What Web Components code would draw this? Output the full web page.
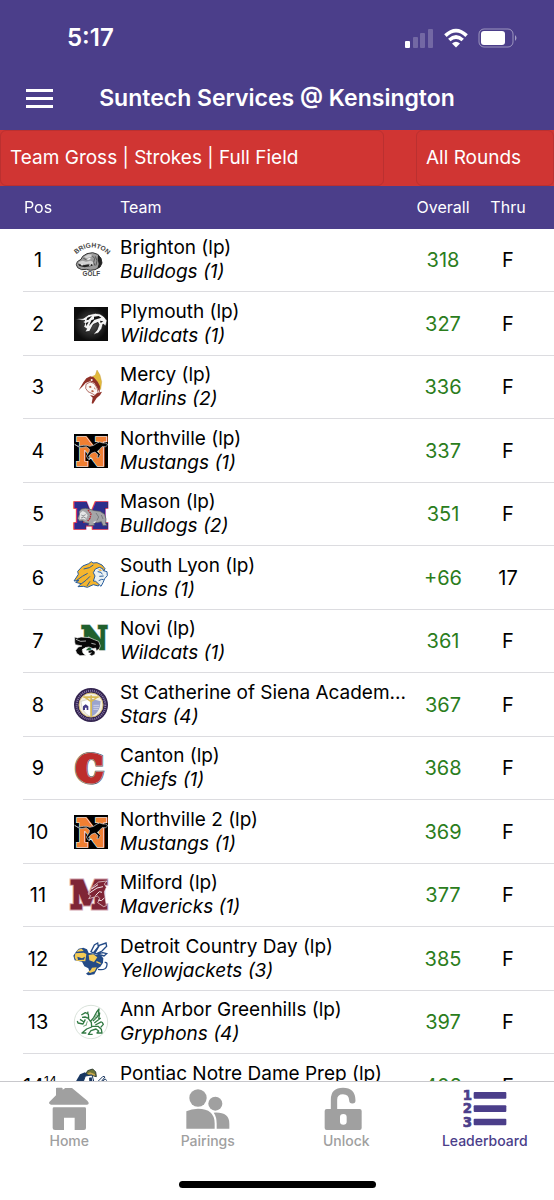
<!DOCTYPE html>
<html lang="en">
<head>
<meta charset="utf-8">
<meta name="viewport" content="width=device-width, initial-scale=1">
<title>Leaderboard</title>
<style>
  html, body {
    height: 100%;
  }
  body {
    --purple: #4b3e8a;
    --red: #d03533;
    --green: #2b7d1c;
    --grey: #a0a0a0;
    --line: #dcdce0;
    background: #fff;
    color: #000;
    font-family: Inter, "Liberation Sans", sans-serif;
    font-size: 20px;
    line-height: 24px;
    margin: 0;
  }
</style>
</head>
<body>
<golf-app>
  <status-bar slot="top" time="5:17"></status-bar>
  <app-header slot="top">Suntech Services @ Kensington</app-header>
  <filter-bar slot="top"></filter-bar>
  <leader-board></leader-board>
  <tab-bar slot="bottom">
    <tab-item icon="home">Home</tab-item>
    <tab-item icon="pairings">Pairings</tab-item>
    <tab-item icon="unlock">Unlock</tab-item>
    <tab-item icon="leaderboard" active>Leaderboard</tab-item>
  </tab-bar>
</golf-app>

<script>
(function() {
  const SLAB = 'font-family="DejaVu Serif Condensed, DejaVu Serif, serif" font-weight="bold" text-anchor="middle" paint-order="stroke" stroke-linejoin="miter"';

  const mustang =
    `<path fill="#000" d="M0 0h102v102H0z"/>
    <text ${SLAB} x="53" y="92" font-size="110" fill="#f07f32" stroke="#fff" stroke-width="11">N</text>
    <text ${SLAB} x="53" y="92" font-size="110" fill="#f07f32" stroke="#f07f32" stroke-width="7">N</text>
    <path fill="#000" stroke="#c9d3dc" stroke-width="2" d="M2 31l10 6 17-3 10 0 8 3 12-3 10-7 8-3 10 3 10 0 4 6-6 5-11 0-8 9-6 5 9 9-5 10-5 0 3-9-9-8-11 4-8 9 4 7-6 1-5-9 9-14 0-7-9-7-16 3-8-3z"/>
    <path stroke="#dfe8ee" stroke-width="3" fill="none" d="M44 77l8-5 4 5"/>`;

  const LOGOS = {
    brighton:
      `<path id="arc" fill="none" d="M7 34Q52 -6 98 32"/>
      <text font-family="Liberation Sans, sans-serif" font-weight="bold" font-size="20" fill="#444"><textPath href="#arc">BRIGHTON</textPath></text>
      <path fill="#9c9c9c" stroke="#333" stroke-width="3" d="M26 40l13-8 17-3 15 5 10 12 3 14-6 12-15 8-14 2-12-3-14 1-12-6-4-9 3-9 11-7z"/>
      <path fill="#d2d2d2" d="M30 41l14-7 11 1-4 7-14 4zM13 57l13-4 10 3 14-3 9 5-2 6-14-2-12 3-14-3z"/>
      <path fill="#222" d="M72 34l9 12 3 14-6 12-8 5 4-14-3-14zM12 62l15 5 26-4 3 5-24 5-16-4z"/>
      <path fill="#f5f5f5" d="M38 48l10-4 2 4-8 3zM20 63l4 6 4-5zM44 65l4 5 4-7z"/>
      <path stroke="#333" stroke-width="2" fill="none" d="M54 38l8 8-3 12 4 10M64 40l5 13-3 14M28 46l9 4"/>
      <text x="52" y="98" text-anchor="middle" font-family="Liberation Sans, sans-serif" font-weight="bold" font-size="19" fill="#444">GOLF</text>`,
    plymouth:
      `<defs><radialGradient id="glow"><stop offset="0" stop-color="#555"/><stop offset="1" stop-color="#0c0c0c"/></radialGradient></defs>
      <path fill="url(#glow)" d="M0 0h102v102H0z"/>
      <path fill="#f4f4f4" stroke="#111" stroke-width="2" d="M4 37l24-3 16-11 20-4 14 2 12 8 9 12-4 16-8-6-4 14-10 13-16 5 12-14 6-16-3-7-14 6-11 21-14 2 5-10-9-5 4-11-8-4 8-4z"/>
      <path fill="#111" d="M40 32l14-5-10 11-7 2zM60 29l14-2 8 5-10 3-12 4zM78 41l10 2-8 5zM36 48l8-4-7 14zM52 40l12-5-10 12-9 10z"/>`,
    mercy:
      `<path fill="#e2b93b" stroke="#b28a2a" d="M69 0l9 15 5 20-3 24-9-20-17-19 10-5z"/>
      <path fill="#8f3027" d="M14 61l14-24 9-12 12-6 10 3 12 13 7 14-1 19-7-14-9-15-13-5-13 5-8 9z"/>
      <path fill="#fbf7f4" stroke="#8f3027" stroke-width="2" d="M36 43l12-7 12 4 9 14 4 17-6 8-12-8-13-6-7-10z"/>
      <path fill="#8f3027" d="M68 70l16-5-6 11-10 8-11 17-4-1 3-17-8-8 12 3z"/>
      <path fill="#b0553a" d="M44 50l6-3 3 5-5 2zM54 60l6 3-3 4-6-3zM62 51l3 8-4-3z"/>
      <circle cx="53" cy="30" r="3" fill="#fff"/>`,
    northville: mustang,
    mason:
      `<text ${SLAB} x="51" y="89" font-size="96" fill="#2d2e8d" stroke="#d52c49" stroke-width="17">M</text>
      <text ${SLAB} x="51" y="89" font-size="96" fill="#2d2e8d" stroke="#2d2e8d" stroke-width="12">M</text>
      <path fill="#a4a5a8" stroke="#55575e" stroke-width="2" d="M15 44l7-8 12-2 14 3 14 4 16 2 14 9 4 14-1 14 4 5-12 1-5-12-12 3-10-1 1 9-18 1 2-7-11-2-8-6-10 1-5-8 5-12z"/>
      <path fill="#e6e6e7" d="M18 49l8-7 8 4 7 9-6 13-9-3-9 2zM56 76l10-5-3 8z"/>
      <path stroke="#b52a38" stroke-width="4" fill="none" stroke-dasharray="5 2" d="M42 39l9 11-3 14-7 8"/>
      <path stroke="#63656a" stroke-width="2" fill="none" d="M22 54l5 3 8-4M21 63l8-3 7 4M66 48l8 12-5 10M82 54l5 12"/>`,
    southlyon:
      `<path fill="#f5b52d" stroke="#285d9e" stroke-width="3" d="M0 60l13-20-2-9 15-16 18-7 8-6 5 4 12-1 15 7 9 11-6 12 2 8-8 10-2 12-6 10-15-4-18 8-12-3-16 1 9-9-16-4 10-6z"/>
      <path fill="#eaf1f3" stroke="#285d9e" stroke-width="3" d="M64 24l12-5 10 4 2 6 11 3 1 12-8 9-5 12-6 11-7-7-9-8-7-1 5-15-5-10z"/>
      <path stroke="#285d9e" stroke-width="3" fill="none" d="M8 58l17-12 16-9M20 70l17-13 11-11M29 24l17-4 12-8M71 32l10 2 4 6M76 46l13-1M74 59l9-4 6 1M48 61l-9 14"/>
      <path fill="#f5b52d" d="M72 25l8 0 4 5-8-1z"/>`,
    novi:
      `<text ${SLAB} x="61" y="76" font-size="96" fill="#20602d" stroke="#90a793" stroke-width="9">N</text>
      <text ${SLAB} x="61" y="76" font-size="96" fill="#20602d" stroke="#20602d" stroke-width="6">N</text>
      <path fill="#080808" stroke="#eee" stroke-width="2" d="M2 39l8 3 11-3 26 2 14 6 13 5 5 14-4 10-8 4-2-8-8 2-12-5-12 2-8 8 2 8 9 7-18 1-10-7-3-9 8-10 11-3-20-4-2-8z"/>
      <path fill="#fff" d="M24 76l10-5 12-1-8 6-4 10 5 9-9-5-2-8z"/>
      <path fill="#080808" stroke="#eee" stroke-width="1" d="M43 80l12-3 8 6-1 8-9 4-7-4 7-5-9 1z"/>
      <path stroke="#fff" stroke-width="2" fill="none" d="M6 46l14 6 16-1M52 58l13 3"/>`,
    stcatherine:
      `<circle cx="51" cy="51" r="51" fill="#33244f"/>
      <circle cx="51" cy="51" r="43" fill="none" stroke="#8a78a8" stroke-width="6" stroke-dasharray="3 3"/>
      <circle cx="51" cy="51" r="36" fill="#f3eee2" stroke="#d5bd74" stroke-width="3"/>
      <path fill="#fff" stroke="#998" stroke-width="1" d="M21 40l29-8v54Q24 76 21 40z"/>
      <path fill="#9ba4ce" d="M52 32l28 8Q78 76 52 86z"/>
      <path fill="#d7b954" d="M49 22h5v64h-5zM28 25h46v5H28zM32 30l17 12v-5l-9-7zM70 30L54 42v-5l9-7z"/>
      <path fill="#453b86" d="M27 55l8-6 8 6v11h-5v-7h-5v7h-6z"/>
      <path stroke="#e7e9f7" stroke-width="2" d="M58 52h18M58 58h18M58 64h14"/>`,
    canton:
      `<text ${SLAB} x="46" y="91" font-size="108" fill="#bd2d2b" stroke="#52504e" stroke-width="18">C</text>
      <text ${SLAB} x="46" y="91" font-size="108" fill="#bd2d2b" stroke="#bbb" stroke-width="15">C</text>
      <text ${SLAB} x="46" y="91" font-size="108" fill="#bd2d2b" stroke="#bd2d2b" stroke-width="12">C</text>`,
    milford:
      `<text ${SLAB} x="45" y="91" font-size="110" fill="#7f2536" stroke="#d4a9b2" stroke-width="15">M</text>
      <text ${SLAB} x="45" y="91" font-size="110" fill="#7f2536" stroke="#7f2536" stroke-width="9">M</text>
      <path fill="#7f2536" stroke="#f5e9eb" stroke-width="2" d="M42 48l14-22 18-14 25-3-8 9 6 10-6 14 3 20 3 21-8 3-18-12 7-12-8-8-12 4-14 4 6-9z"/>
      <path stroke="#f5e9eb" stroke-width="3" fill="none" d="M45 46l24-16 18-4M54 32l18-12M64 53l12-12 8 2M72 66l10 2 9-8"/>`,
    detroit:
      `<path fill="#fff" stroke="#244b87" stroke-width="4" d="M51 29l10-20 10-6 2 11-15 19zM62 34l14-24 20-7 2 10-14 14-16 8zM70 36l16-4 12 3-8 7z"/>
      <path fill="#244b87" d="M6 29l8-9 14-3 11 5 5 11 10 1 12 4 14 1 8 10-1 13-8 12-8 5-10 18-18 3-7-5 10-7-3-9-12-6-7-14-22-4-4-14z"/>
      <path fill="#f4cb55" d="M4 34l25-2 8 4-3 22-27-2-5-10zM44 39l14-2 12 9-10 14-14-5zM54 77l14-1-6 12-14 5-6-4 8-4zM13 23l10-3 6 7-22 2z"/>
      <path fill="#244b87" d="M10 44l14 5 9-5-3 9-18 1z"/>
      <path stroke="#244b87" stroke-width="4" fill="none" d="M72 82q22 4 26-9t-6-12M39 94l10 4"/>
      <path stroke="#f4cb55" stroke-width="4" fill="none" d="M67 59l13 6"/>`,
    greenhills:
      `<circle cx="51" cy="51" r="50" fill="#fff" stroke="#c5d3c7" stroke-width="2"/>
      <path stroke="#317a43" stroke-width="4" fill="none" stroke-linejoin="round" d="M22 30l12-7 9 4 1 13-11-4-9 1M40 28l2-8M43 41l9 11 1 14-15 6-14 12h13M34 43l-7 14-15-3-2-6M30 51l-12-8M48 51l11-13 9-17 7-9-2 16M57 48l13-13 7-11-3 19M61 54l19-15M64 60l19-10M54 64l18 0 10 9 2 11h-15l5-6-8-6-15 5-8 11h13M80 67l8-9-4-7"/>
      <path stroke="#72a67c" stroke-width="3" fill="none" d="M28 64l11-5M40 49l-4 12M68 28l-6 16"/>`,
    pontiac:
      `<path fill="#6d7536" stroke="#2e3c31" stroke-width="3" d="M34 18l7-13 15-5 9 9 2 14-14-4z"/>
      <path fill="#cba84c" d="M39 15l9-5 14 5 2 5-13-3z"/>
      <path fill="#193761" d="M4 40l14-24 15-6 14 12-8 20z"/>
      <path fill="#fff" stroke="#193761" stroke-width="3" d="M27 40l7-19 20-3 6 22zM69 40l18-18 6 2-13 16M82 39l12-9 4 5"/>
      <path fill="#193761" d="M45 26l8-1 3 15-10-1z"/>`
  };

  const ICONS = {
    home:
      `<path d="M27 4q0-2 3-2h14q3 0 3 3v3l8-5h20l46 38q9 9-1 12H12q-10-3-3-10l18-18z"/>
      <path fill-rule="evenodd" d="M21 61h92q4 0 4 4v58q0 6-6 6H83V92H51v37H24q-7 0-7-6V65q0-4 4-4z"/>`,
    pairings:
      `<circle cx="36" cy="33" r="26"/>
      <circle cx="88" cy="50" r="21"/>
      <path d="M1 125V73q15-8 35-8 50 0 50 44v16zM83 77q47-3 47 33v15H92v-15q0-21-9-33z"/>`,
    unlock:
      `<path fill="none" stroke="currentColor" stroke-width="19" stroke-linecap="round" d="M30 72V38q0-26 27-26t28 28"/>
      <path fill-rule="evenodd" d="M8 66h99q6 0 6 6v51q0 6-6 6H8q-6 0-6-6V72q0-6 6-6zm50 15q-10 0-10 9v14q0 9 10 9t10-9V90q0-9-10-9z"/>`,
    leaderboard:
      `<g font-family="DejaVu Sans, sans-serif" font-weight="bold" font-size="40" text-anchor="middle" stroke="currentColor" stroke-width="2">
        <text x="13" y="39">1</text><text x="13" y="79">2</text><text x="13" y="119">3</text>
      </g>
      <rect x="32" y="15" width="98" height="20" rx="3"/>
      <rect x="32" y="55" width="98" height="20" rx="3"/>
      <rect x="32" y="95" width="98" height="20" rx="3"/>`
  };

  const TEAMS = [
    {pos: '1', logo: 'brighton', name: 'Brighton (lp)', squad: 'Bulldogs (1)', overall: '318', thru: 'F'},
    {pos: '2', logo: 'plymouth', name: 'Plymouth (lp)', squad: 'Wildcats (1)', overall: '327', thru: 'F'},
    {pos: '3', logo: 'mercy', name: 'Mercy (lp)', squad: 'Marlins (2)', overall: '336', thru: 'F'},
    {pos: '4', logo: 'northville', name: 'Northville (lp)', squad: 'Mustangs (1)', overall: '337', thru: 'F'},
    {pos: '5', logo: 'mason', name: 'Mason (lp)', squad: 'Bulldogs (2)', overall: '351', thru: 'F'},
    {pos: '6', logo: 'southlyon', name: 'South Lyon (lp)', squad: 'Lions (1)', overall: '+66', thru: '17'},
    {pos: '7', logo: 'novi', name: 'Novi (lp)', squad: 'Wildcats (1)', overall: '361', thru: 'F'},
    {pos: '8', logo: 'stcatherine', name: 'St Catherine of Siena Academ...', squad: 'Stars (4)', overall: '367', thru: 'F'},
    {pos: '9', logo: 'canton', name: 'Canton (lp)', squad: 'Chiefs (1)', overall: '368', thru: 'F'},
    {pos: '10', logo: 'northville', name: 'Northville 2 (lp)', squad: 'Mustangs (1)', overall: '369', thru: 'F'},
    {pos: '11', logo: 'milford', name: 'Milford (lp)', squad: 'Mavericks (1)', overall: '377', thru: 'F'},
    {pos: '12', logo: 'detroit', name: 'Detroit Country Day (lp)', squad: 'Yellowjackets (3)', overall: '385', thru: 'F'},
    {pos: '13', logo: 'greenhills', name: 'Ann Arbor Greenhills (lp)', squad: 'Gryphons (4)', overall: '397', thru: 'F'},
    {pos: '14<sup>14</sup>', logo: 'pontiac', name: 'Pontiac Notre Dame Prep (lp)', squad: '', overall: '402', thru: 'F'}
  ];

  class GolfApp extends HTMLElement {
    connectedCallback() {
      this._root = this.attachShadow({mode: 'open'});
      this._root.innerHTML =
        `<style>
          :host {
            display: flex;
            flex-direction: column;
            height: 100vh;
          }
          main {
            flex: 1;
            min-height: 0;
            overflow-y: auto;
            scrollbar-width: none;
          }
        </style>
        <slot name="top"></slot>
        <main><slot></slot></main>
        <slot name="bottom"></slot>`;
    }
  }

  class StatusBar extends HTMLElement {
    connectedCallback() {
      this._root = this.attachShadow({mode: 'open'});
      this._root.innerHTML =
        `<style>
          :host {
            align-items: center;
            background: var(--purple);
            color: #fff;
            display: flex;
            font-size: 24px;
            font-weight: 600;
            justify-content: space-between;
            padding: 26px 37px 18px 67px;
          }
          div {
            align-items: center;
            display: flex;
            gap: 10px;
          }
          svg {
            display: block;
          }
        </style>
        <span>${this.getAttribute('time')}</span>
        <div>
          <svg width="29" height="20" fill="#fff" aria-hidden="true">
            <rect y="13" width="5" height="7" rx="1"/>
            <g opacity=".22">
              <rect x="8" y="9" width="5" height="11" rx="1"/>
              <rect x="15" y="5" width="5" height="15" rx="1"/>
              <rect x="23" y="1" width="5" height="19" rx="1"/>
            </g>
          </svg>
          <svg width="24" height="20" viewBox="0 0 24 20" fill="none" stroke="#fff" stroke-width="3.6" aria-hidden="true">
            <path d="M1.4 7.6q10.600-10 21.200 0M5.300 12q6.700-6 13.400 0"/>
            <path fill="#fff" stroke="none" d="M8 15.500q4-3.500 8 0l-4 4z"/>
          </svg>
          <svg width="39" height="20" fill="#fff" aria-hidden="true">
            <rect x="1" y="1" width="34" height="18" rx="5" fill="none" stroke="#fff" stroke-opacity=".45"/>
            <rect x="3" y="3" width="24" height="14" rx="3"/>
            <path opacity=".5" d="M37 7q3 3 0 6z"/>
          </svg>
        </div>`;
    }
  }

  class AppHeader extends HTMLElement {
    connectedCallback() {
      this._root = this.attachShadow({mode: 'open'});
      this._root.innerHTML =
        `<style>
          :host {
            align-items: center;
            background: var(--purple);
            color: #fff;
            display: grid;
            grid-template-columns: 26px 1fr 26px;
            padding: 16px 26px 17px;
          }
          h1 {
            font-size: 23px;
            font-weight: 600;
            line-height: 29px;
            margin: 0;
            text-align: center;
            white-space: nowrap;
          }
          button {
            background: none;
            border: 0;
            color: inherit;
            padding: 0;
          }
          svg {
            display: block;
          }
        </style>
        <button type="button" aria-label="Menu">
          <svg width="27" height="19" fill="currentColor"><path d="M0 0h27v3H0zM0 8h27v3H0zM0 16h27v3H0z"/></svg>
        </button>
        <h1><slot></slot></h1>`;
    }
  }

  class FilterBar extends HTMLElement {
    connectedCallback() {
      this._root = this.attachShadow({mode: 'open'});
      this._root.innerHTML =
        `<style>
          :host {
            background: var(--red);
            display: grid;
            gap: 32px;
            grid-template-columns: 1fr 138px;
          }
          select {
            appearance: none;
            background: none;
            border: 1px solid #bb3030;
            border-radius: 6px;
            color: #fff;
            font: inherit;
            font-size: 19px;
            height: 56px;
            margin: 0;
            min-width: 0;
            padding: 0 9px;
          }
        </style>
        <select aria-label="Format"><option>Team Gross | Strokes | Full Field</option></select>
        <select aria-label="Round"><option>All Rounds</option></select>`;
    }
  }

  class TeamLogo extends HTMLElement {
    connectedCallback() {
      this._root = this.attachShadow({mode: 'open'});
      this._root.innerHTML =
        `<style>
          :host {
            display: block;
            height: 34px;
            margin: 0 auto;
            width: 34px;
          }
          svg {
            display: block;
            overflow: visible;
          }
        </style>
        <svg width="34" height="34" viewBox="0 0 102 102" aria-hidden="true">${LOGOS[this.getAttribute('name')]}</svg>`;
    }
  }

  class LeaderBoard extends HTMLElement {
    connectedCallback() {
      this._root = this.attachShadow({mode: 'open'});
      this._root.innerHTML =
        `<style>
          :host {
            display: block;
            padding-left: 23px;
          }
          table {
            border-collapse: separate;
            border-spacing: 0;
            table-layout: fixed;
            width: 100%;
          }
          .pos { width: 30px; }
          .logo { width: 67px; }
          .overall { width: 66px; }
          .thru { width: 78px; }
          th {
            background: var(--purple);
            color: #fff;
            font-size: 16px;
            font-weight: 400;
            height: 41px;
            padding: 0 0 2px;
            position: sticky;
            top: 0;
            white-space: nowrap;
            z-index: 1;
          }
          /* carries the header colour across the left gutter */
          th:first-child {
            box-shadow: -23px 0 var(--purple);
          }
          td {
            border-bottom: 1px solid var(--line);
            height: 63px;
            padding: 0;
            text-align: center;
            white-space: nowrap;
          }
          tr:nth-child(odd) td {
            height: 62px;
          }
          td:nth-child(2) {
            padding-left: 9px;
          }
          th:nth-child(3), td:nth-child(3) {
            text-align: left;
          }
          td:nth-child(3) {
            font-size: 19px;
          }
          td:nth-child(4) {
            color: var(--green);
          }
          th:last-child, td:last-child {
            padding-right: 14px;
          }
          span, em {
            display: block;
            min-height: 24px;
          }
          sup {
            font-size: 12px;
            line-height: 0;
          }
        </style>
        <table>
          <colgroup><col class="pos"><col class="logo"><col><col class="overall"><col class="thru"></colgroup>
          <thead>
            <tr><th>Pos</th><th></th><th>Team</th><th>Overall</th><th>Thru</th></tr>
          </thead>
          <tbody>
            ${TEAMS.map(t => this._row(t)).join('')}
          </tbody>
        </table>`;
    }

    _row(t) {
      return `<tr>
        <td>${t.pos}</td>
        <td><team-logo name="${t.logo}"></team-logo></td>
        <td><span>${t.name}</span><em>${t.squad}</em></td>
        <td>${t.overall}</td>
        <td>${t.thru}</td>
      </tr>`;
    }
  }

  class TabBar extends HTMLElement {
    connectedCallback() {
      this._root = this.attachShadow({mode: 'open'});
      this._root.innerHTML =
        `<style>
          :host {
            background: #fff;
            border-top: 1px solid #c8c8cc;
            display: block;
          }
          nav {
            display: grid;
            grid-template-columns: repeat(4, 1fr);
            padding: 5px 0 30px;
          }
          div {
            background: #000;
            border-radius: 4px;
            height: 7px;
            margin: 0 auto 12px;
            width: 197px;
          }
        </style>
        <nav><slot></slot></nav>
        <div></div>`;
    }
  }

  class TabItem extends HTMLElement {
    connectedCallback() {
      this._root = this.attachShadow({mode: 'open'});
      this._root.innerHTML =
        `<style>
          :host {
            color: var(--grey);
            display: block;
          }
          :host([active]) {
            color: var(--purple);
          }
          a {
            align-items: center;
            color: inherit;
            display: flex;
            flex-direction: column;
            font-size: 14px;
            font-weight: 500;
            line-height: 20px;
            text-decoration: none;
          }
          svg {
            display: block;
          }
        </style>
        <a href="#${this.getAttribute('icon')}">
          <svg width="44" height="44" viewBox="0 0 132 132" fill="currentColor" aria-hidden="true">${ICONS[this.getAttribute('icon')]}</svg>
          <slot></slot>
        </a>`;
    }
  }

  customElements.define('golf-app', GolfApp);
  customElements.define('status-bar', StatusBar);
  customElements.define('app-header', AppHeader);
  customElements.define('filter-bar', FilterBar);
  customElements.define('team-logo', TeamLogo);
  customElements.define('leader-board', LeaderBoard);
  customElements.define('tab-bar', TabBar);
  customElements.define('tab-item', TabItem);
}());
</script>
</body>
</html>
